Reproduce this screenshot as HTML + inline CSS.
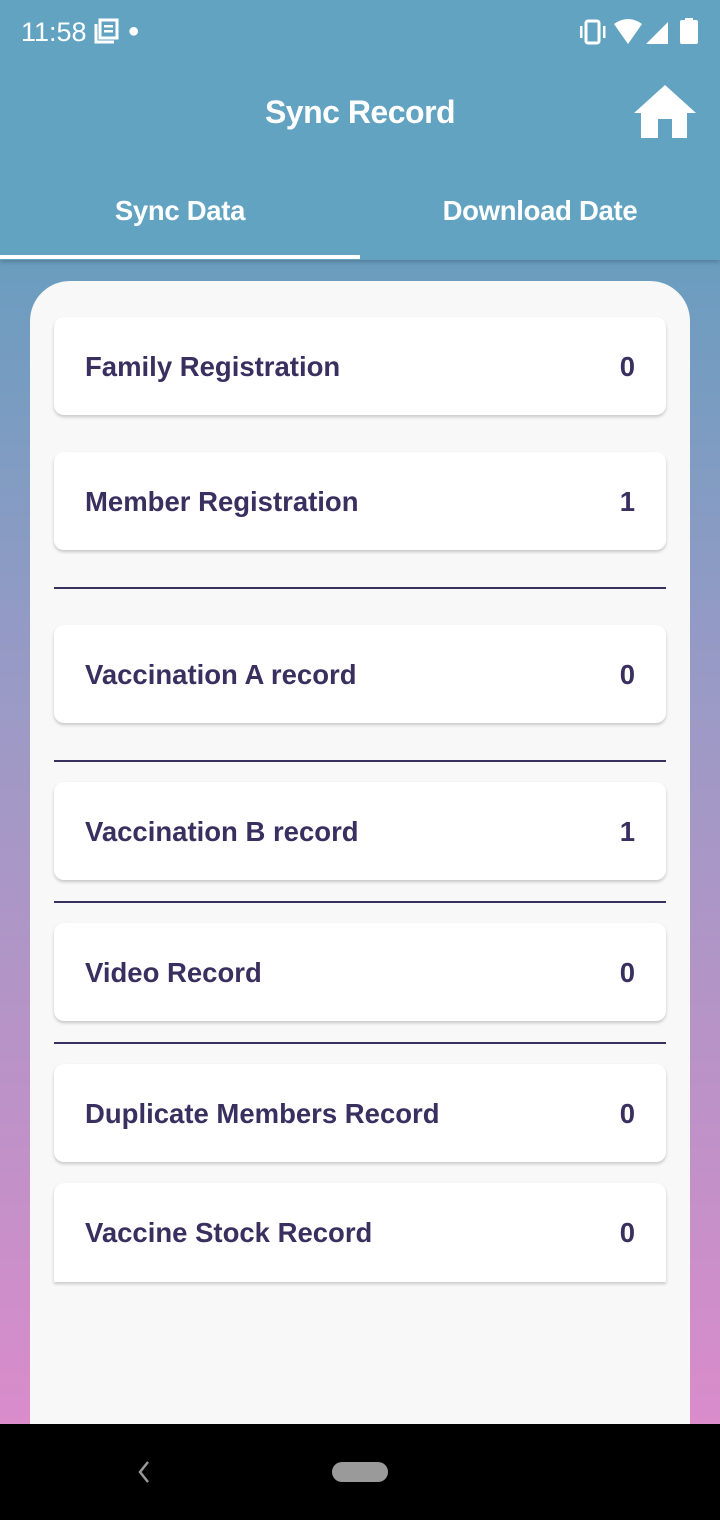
<!DOCTYPE html>
<html><head><meta charset="utf-8"><style>
*{margin:0;padding:0;box-sizing:border-box}
body{width:720px;height:1520px;position:relative;overflow:hidden;font-family:"Liberation Sans",sans-serif;background:linear-gradient(180deg,#6a9dbf 260px,#9b9ac6 700px,#c590c8 1200px,#da8ccb 1424px)}
.hdr{position:absolute;left:0;top:0;width:720px;height:260px;background:#62a3c2;box-shadow:0 2px 4px rgba(0,0,0,.2)}
.st{position:absolute;top:17px;left:21px;color:#fff;font-size:27px}
.title{position:absolute;top:94px;width:720px;text-align:center;color:#fff;font-size:32px;font-weight:bold;letter-spacing:-0.5px}
.tab{position:absolute;top:195px;width:360px;text-align:center;color:#fff;font-size:27.5px;font-weight:bold;letter-spacing:-0.3px}
.ind{position:absolute;left:0;top:255px;width:360px;height:4px;background:#fff}
.panel{position:absolute;left:30px;top:281px;width:660px;height:1200px;background:#f8f8f8;border-radius:40px 40px 0 0}
.card{position:absolute;left:54px;width:612px;height:98px;background:#fff;border-radius:10px;box-shadow:0 2px 3px rgba(0,0,0,.2);color:#3a3060;font-weight:bold;font-size:27.5px}
.card span{position:absolute;left:31px;top:34px}
.card b{position:absolute;right:31px;top:34px}
.ln{position:absolute;left:54px;width:612px;height:2px;background:#3a3060}
.nav{position:absolute;left:0;top:1424px;width:720px;height:96px;background:#000}
</style></head><body>
<div class="hdr">
<div class="st">11:58 <svg width="26" height="26" viewBox="0 0 26 26" style="vertical-align:-3px"><rect x="6" y="2" width="17" height="18" fill="none" stroke="#fff" stroke-width="3"/><rect x="10" y="7" width="9" height="2.5" fill="#fff"/><rect x="10" y="12" width="9" height="2.5" fill="#fff"/><path d="M2 6v18h18" fill="none" stroke="#fff" stroke-width="3"/></svg> <span style="font-size:20px;vertical-align:4px">●</span></div>
<svg style="position:absolute;left:578px;top:18px" width="124" height="28" viewBox="0 0 124 28"><rect x="8" y="3" width="13" height="22" rx="2" fill="none" stroke="#fff" stroke-width="3"/><rect x="2" y="8" width="2.5" height="12" fill="#fff"/><rect x="25" y="8" width="2.5" height="12" fill="#fff"/><path d="M36 6 Q50 -4 64 6 L50 26Z" fill="#fff"/><path d="M68 26 L90 4 V26Z" fill="#fff"/><rect x="102" y="2" width="18" height="24" rx="2" fill="#fff"/><rect x="107" y="0" width="8" height="3" fill="#fff"/></svg>
<div class="title">Sync Record</div>
<svg style="position:absolute;left:634px;top:85px" width="63" height="54" viewBox="0 0 63 54"><path d="M31 0 L62 28 H53 V53 H38 V34 H24 V53 H7 V28 H0Z" fill="#fff"/></svg>
<div class="tab" style="left:0">Sync Data</div>
<div class="tab" style="left:360px">Download Date</div>
<div class="ind"></div>
</div>
<div class="panel"></div>
<div class="card" style="top:317px"><span>Family Registration</span><b>0</b></div>
<div class="card" style="top:452px"><span>Member Registration</span><b>1</b></div>
<div class="ln" style="top:587px"></div>
<div class="card" style="top:625px"><span>Vaccination A record</span><b>0</b></div>
<div class="ln" style="top:760px"></div>
<div class="card" style="top:782px"><span>Vaccination B record</span><b>1</b></div>
<div class="ln" style="top:901px"></div>
<div class="card" style="top:923px"><span>Video Record</span><b>0</b></div>
<div class="ln" style="top:1042px"></div>
<div class="card" style="top:1064px"><span>Duplicate Members Record</span><b>0</b></div>
<div class="card" style="top:1183px;height:99px;border-radius:10px 10px 0 0"><span>Vaccine Stock Record</span><b>0</b></div>
<div class="nav">
<svg style="position:absolute;left:136px;top:36px" width="16" height="24" viewBox="0 0 16 24"><path d="M12 2 L4 12 L12 22" fill="none" stroke="#9a9a9a" stroke-width="2.5"/></svg>
<div style="position:absolute;left:332px;top:38px;width:56px;height:20px;border-radius:10px;background:#9a9a9a"></div>
</div>
</body></html>
